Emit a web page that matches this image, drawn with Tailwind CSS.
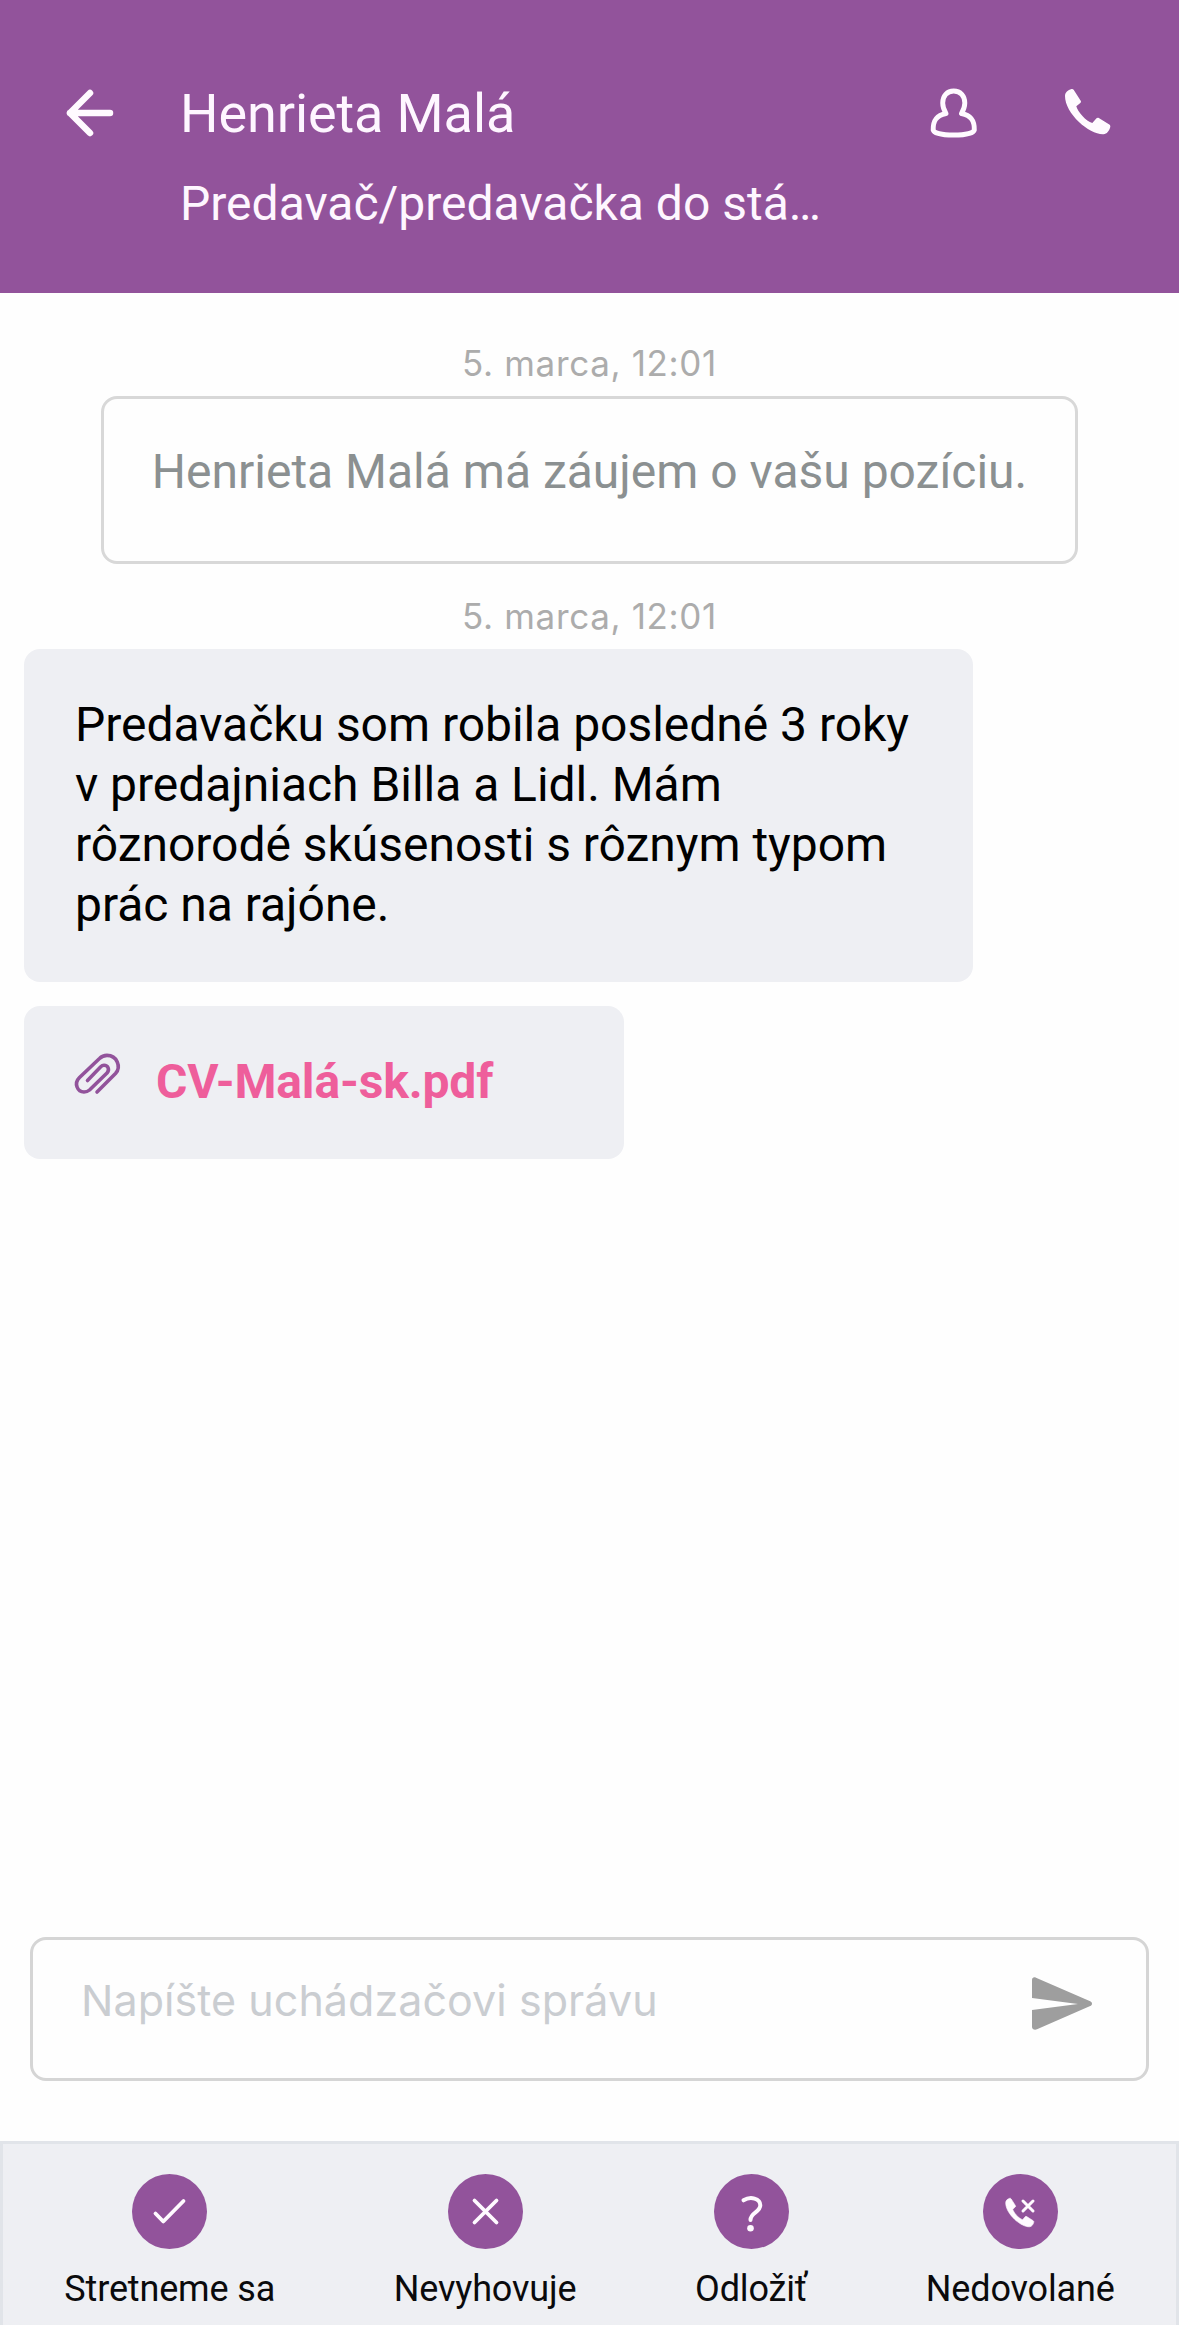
<!DOCTYPE html>
<html lang="sk">
<head>
<meta charset="utf-8">
<title>Henrieta Malá</title>
<script src="https://cdn.jsdelivr.net/npm/@tailwindcss/browser@4"></script>
</head>
<body class="bg-[#fefefe] font-['Roboto',sans-serif]">
<div class="flex h-[2325px] w-[1179px] flex-col">
  <header class="flex h-[293px] shrink-0 items-start bg-[#92539b] pt-[75px] text-[#fef6ff]">
    <svg class="ml-[60px] h-[76px] w-[60px] shrink-0" viewBox="0 0 60 76" fill="none" stroke="#fffaff" stroke-width="6.500" stroke-linecap="round" stroke-linejoin="round"><path d="M30 18 L10 38 L30 58 M10 38 H50"/></svg>
    <div class="ml-[60px] flex w-[660px] flex-col">
      <h1 class="pt-px text-[54px] leading-[76px] tracking-[-0.1px]"><span>Henrieta Malá</span></h1>
      <p class="mt-[22px] text-[48px] leading-[60px]"><span>Predavač/predavačka do stá…</span></p>
    </div>
    <svg class="ml-[85px] h-[76px] w-[60px] shrink-0" viewBox="925 75 60 76" fill="none" stroke="#fffaff" stroke-width="4.900" stroke-linejoin="round"><path d="M953.7 91 C960.500 91 964.800 96 964.800 103 C964.800 107.500 963.200 110.500 961.500 113.500 C972 115.500 974.500 122 974.300 130 C973.500 133 966 135 953.700 135 C941.500 135 934 133 933.200 130 C933 122 935.500 115.500 946 113.500 C944.200 110.500 942.700 107.500 942.700 103 C942.700 96 947 91 953.700 91 Z"/></svg>
    <svg class="ml-[73px] h-[76px] w-[60px] shrink-0" viewBox="1058 75 60 76" fill="#fffaff"><path d="M1071.500 89 C1072.500 88.800 1073.300 89.200 1073.800 90 L1080.700 100.700 C1081.200 101.500 1081 102.300 1080.300 102.900 L1076.300 106.200 C1077.800 112 1086 121 1092.300 123 L1096.500 118.300 C1097.100 117.600 1098 117.500 1098.800 118 L1109.300 124.600 C1110.200 125.200 1110.600 126.200 1110.200 127.200 C1109 131 1107 134 1103.500 134.200 C1090 135 1065 114 1065 96 C1065 92.500 1068 90 1071.500 89 Z"/></svg>
  </header>

  <main class="flex flex-1 flex-col">
    <time class="mt-[43px] text-center font-['Inter',sans-serif] text-[35px] leading-[54px] tracking-[0.65px] text-[#acacac]"><span>5. marca, 12:01</span></time>
    <div class="mx-[101px] mt-[6px] h-[168px] rounded-[16px] border-[3px] border-[#d8d8d8] pt-[43px] text-center text-[48px] leading-[60px] text-[#8b9091]"><span class="whitespace-nowrap">Henrieta Malá má záujem o vašu pozíciu.</span></div>
    <time class="mt-[25px] text-center font-['Inter',sans-serif] text-[35px] leading-[54px] tracking-[0.65px] text-[#acacac]"><span>5. marca, 12:01</span></time>
    <div class="ml-[24px] mt-[6px] h-[333px] w-[949px] rounded-[16px] bg-[#eeeff3] pl-[51px] pt-[46px] text-[48px] leading-[60px] text-black">
      <p class="tracking-[-0.03px]"><span>Predavačku som robila posledné 3 roky</span><br><span>v predajniach Billa a Lidl. Mám</span><br><span>rôznorodé skúsenosti s rôznym typom</span><br><span>prác na rajóne.</span></p>
    </div>
    <div class="ml-[24px] mt-[24px] flex h-[153px] w-[600px] items-start rounded-[16px] bg-[#eeeff3] pl-[48px]">
      <svg class="mt-[44px] h-[48px] w-[52px] shrink-0" viewBox="72 1050 52 48" fill="none" stroke="#92539b" stroke-width="3.600" stroke-linecap="round" stroke-linejoin="round"><path d="M97 1092 L115.500 1073.500 C121.500 1067 117 1055.400 107 1055.400 C104 1055.400 101.500 1056.500 99.500 1058.500 L79.500 1077.500 C73.500 1083.500 77.500 1092 84 1092 C86.500 1092 88 1091.300 89.500 1090 L107 1073 C110 1069.500 108 1065.300 104 1065.300 C102.500 1065.300 101.500 1066 100.500 1067 L87.500 1080.500"/></svg>
      <a class="ml-[32px] mt-[46px] text-[48px] font-bold leading-[60px] tracking-[-0.15px] text-[#ee5e9b]"><span>CV-Malá-sk.pdf</span></a>
    </div>
  </main>

  <div class="mx-[30px] mb-[60px] flex h-[144px] shrink-0 items-start justify-between rounded-[16px] border-[3px] border-[#d5d5d5] pl-[48px] pr-[54px]">
    <span class="mt-[30px] font-['Inter',sans-serif] text-[43px] leading-[60px] tracking-[0.06px] text-[#cacdd1]">Napíšte uchádzačovi správu</span>
    <svg class="mt-[37px] h-[53px] w-[60px] shrink-0" viewBox="0 0 60 53" fill="#9e9e9e"><path d="M0 3 C0 .8 1.800 -.2 4 .7 L58.200 24.200 C60.600 25.300 60.600 28 58.200 29 L5 52.300 C2.500 53.200 0 52.200 0 50 V33 L46 27 L0 21 Z"/></svg>
  </div>

  <nav class="flex h-[184px] shrink-0 items-start justify-around border-x-[3px] border-t-[3px] border-[#e1e4e9] bg-[#eeeff3] px-[2px] pt-[30px] text-[36px] leading-[48px] tracking-[-0.15px] text-[#0a0a0c]">
    <div class="flex flex-col items-center gap-[16px]">
      <svg class="h-[75px] w-[75px]" viewBox="0 0 75 75" fill="none" stroke="#fffaff" stroke-width="3.800" stroke-linecap="round" stroke-linejoin="round"><circle cx="37.500" cy="37.500" r="37.500" fill="#92539b" stroke="none"/><path d="M23.500 39.500 L31.300 47.500 L51.500 27"/></svg>
      <span>Stretneme sa</span>
    </div>
    <div class="flex flex-col items-center gap-[16px]">
      <svg class="h-[75px] w-[75px]" viewBox="0 0 75 75" fill="none" stroke="#fffaff" stroke-width="3.800" stroke-linecap="round"><circle cx="37.500" cy="37.500" r="37.500" fill="#92539b" stroke="none"/><path d="M26.500 26.500 L48.500 48.500 M48.500 26.500 L26.500 48.500"/></svg>
      <span>Nevyhovuje</span>
    </div>
    <div class="flex flex-col items-center gap-[16px]">
      <svg class="h-[75px] w-[75px]" viewBox="0 0 75 75" fill="none" stroke="#fffaff" stroke-width="4" stroke-linecap="round"><circle cx="37.500" cy="37.500" r="37.500" fill="#92539b" stroke="none"/><path d="M29.500 26.300 C36.500 22 46.300 24.300 46.300 31.300 C46.300 38.300 36.500 38.500 36.500 46"/><circle cx="36.500" cy="54.200" r="3.300" fill="#fffaff" stroke="none"/></svg>
      <span>Odložiť</span>
    </div>
    <div class="flex flex-col items-center gap-[16px]">
      <svg class="h-[75px] w-[75px]" viewBox="0 0 75 75"><circle cx="37.500" cy="37.500" r="37.500" fill="#92539b"/><path transform="translate(22.700 24.300) scale(.62 .63) translate(-1065 -89)" fill="#fffaff" stroke="#fffaff" stroke-width="1" stroke-linejoin="round" d="M1071.500 89 C1072.500 88.800 1073.300 89.200 1073.800 90 L1080.700 100.700 C1081.200 101.500 1081 102.300 1080.300 102.900 L1076.300 106.200 C1077.800 112 1086 121 1092.300 123 L1096.500 118.300 C1097.100 117.600 1098 117.500 1098.800 118 L1109.300 124.600 C1110.200 125.200 1110.600 126.200 1110.200 127.200 C1109 131 1107 134 1103.500 134.200 C1090 135 1065 114 1065 96 C1065 92.500 1068 90 1071.500 89 Z"/><path d="M40 27 L50 37 M50 27 L40 37" stroke="#fffaff" stroke-width="3" stroke-linecap="round"/></svg>
      <span>Nedovolané</span>
    </div>
  </nav>
</div>
</body>
</html>
